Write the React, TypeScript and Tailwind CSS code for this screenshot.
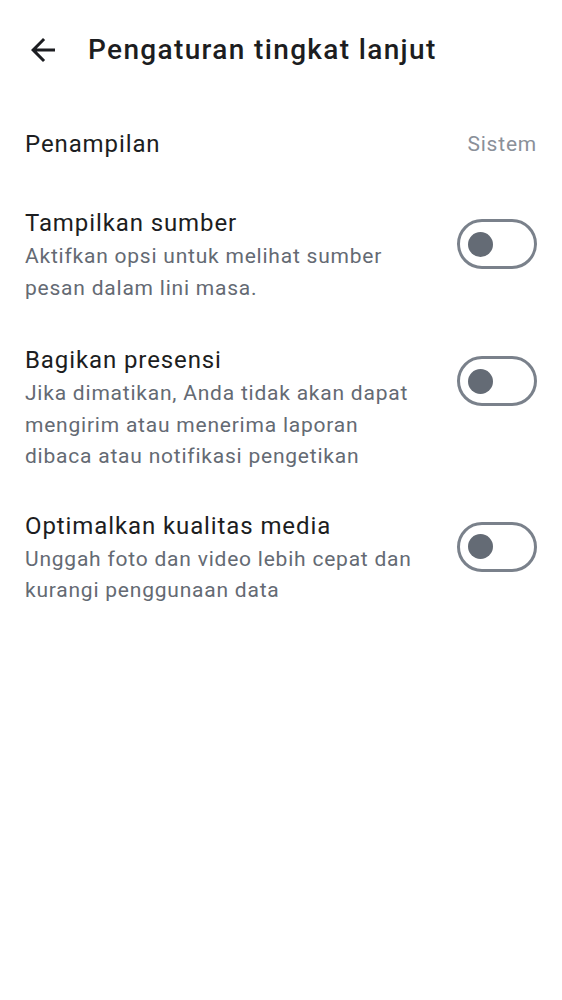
import React from "react";

function Toggle() {
  return (
    <div className="w-[80px] h-[50px] rounded-full border-[3px] border-[#7a818b] flex items-center pl-[8px] shrink-0">
      <div className="w-[25px] h-[25px] rounded-full bg-[#646b75]" />
    </div>
  );
}

function Item({ title, desc, className }: { title: string; desc: string[]; className?: string }) {
  return (
    <div className={"flex items-start justify-between " + (className ?? "")}>
      <div className="flex flex-col pt-[1px]">
        <div className="text-[24px] leading-[34px] text-[#1c1d21] tracking-[0.9px]">{title}</div>
        <div className="flex flex-col pt-[1px]">
          {desc.map((d, i) => (
            <div key={i} className="text-[21px] leading-[31.5px] text-[#646a73] tracking-[0.78px]">
              {d}
            </div>
          ))}
        </div>
      </div>
      <div className="mt-[14px]">
        <Toggle />
      </div>
    </div>
  );
}

export default function App() {
  return (
    <div className="w-[562px] h-[1000px] bg-white" style={{ fontFamily: "Roboto, 'Noto Sans', sans-serif" }}>
      <div className="h-[100px] flex items-center">
        <svg width="36" height="36" viewBox="0 0 24 24" className="ml-[25px]">
          <path d="M20 11H7.83l5.59-5.59L12 4l-8 8 8 8 1.41-1.41L7.83 13H20v-2z" fill="#1c1d21" />
        </svg>
        <div className="ml-[27px] text-[28px] leading-[36px] font-medium text-[#1c1d21] tracking-[1.35px]">Pengaturan tingkat lanjut</div>
      </div>
      <div className="px-[25px]">
        <div className="mt-[27px] h-[34px] flex items-center justify-between">
          <div className="text-[24px] leading-[34px] text-[#1c1d21] tracking-[0.9px]">Penampilan</div>
          <div className="text-[21px] leading-[34px] text-[#8a9099] tracking-[0.78px]">Sistem</div>
        </div>
        <Item
          className="mt-[44px]"
          title="Tampilkan sumber"
          desc={["Aktifkan opsi untuk melihat sumber", "pesan dalam lini masa."]}
        />
        <Item
          className="mt-[38px]"
          title="Bagikan presensi"
          desc={["Jika dimatikan, Anda tidak akan dapat", "mengirim atau menerima laporan", "dibaca atau notifikasi pengetikan"]}
        />
        <Item
          className="mt-[35px]"
          title="Optimalkan kualitas media"
          desc={["Unggah foto dan video lebih cepat dan", "kurangi penggunaan data"]}
        />
      </div>
    </div>
  );
}
